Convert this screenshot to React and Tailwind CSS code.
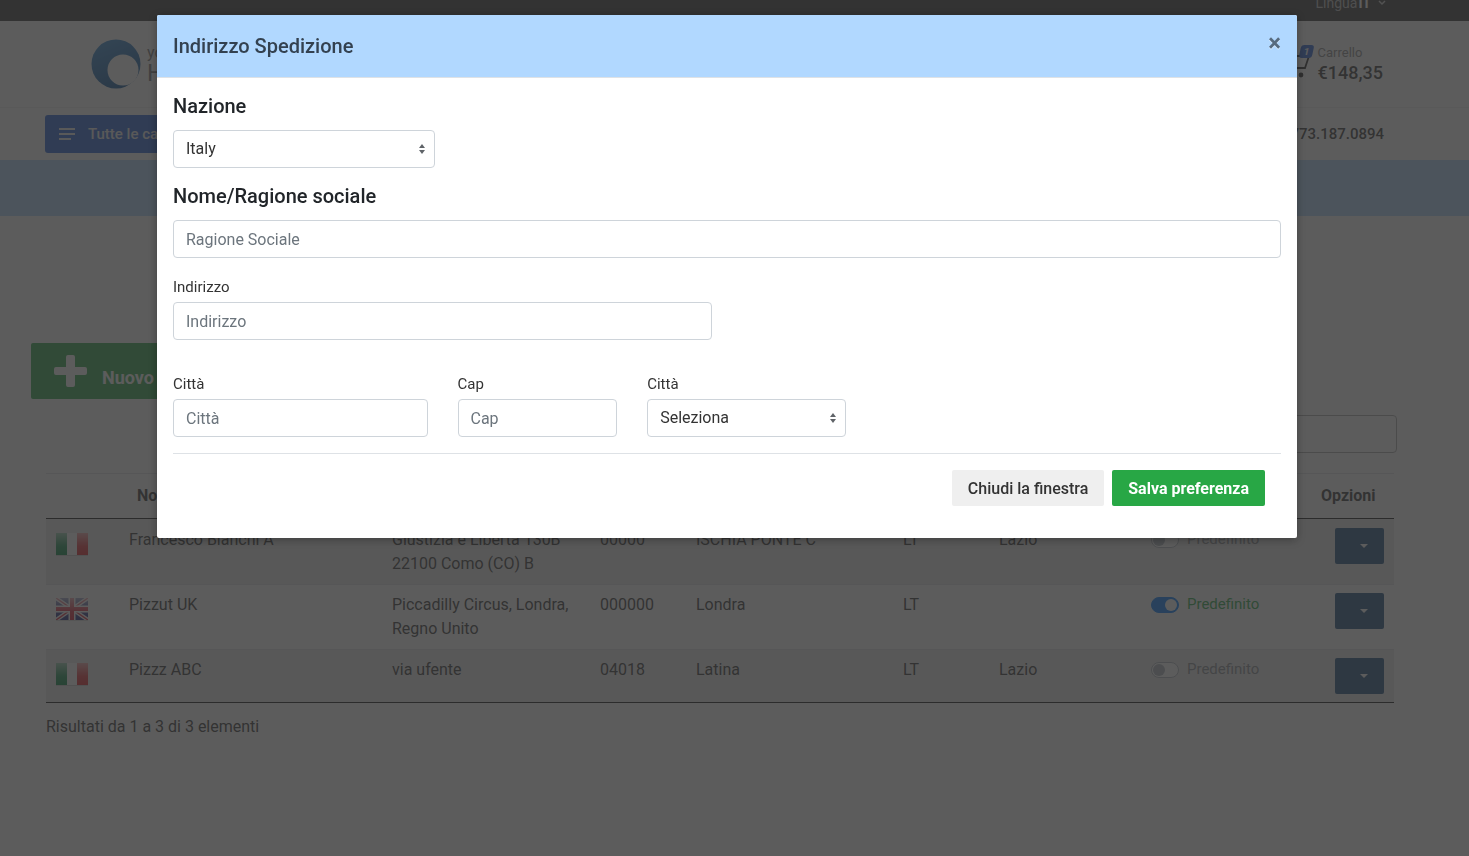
import { useState } from 'react';

const inputClass =
  'block h-[38px] w-full rounded border border-[#ced4da] bg-white px-3 text-base text-[#495057] placeholder:text-[#6c757d]';

const addresses = [
  {
    id: 1,
    flag: 'it',
    name: 'Francesco Bianchi A',
    address: ['Giustizia e Libertà 130B', '22100 Como (CO) B'],
    cap: '00000',
    city: 'ISCHIA PONTE C',
    province: 'LT',
    region: 'Lazio',
  },
  {
    id: 2,
    flag: 'uk',
    name: 'Pizzut UK',
    address: ['Piccadilly Circus, Londra,', 'Regno Unito'],
    cap: '000000',
    city: 'Londra',
    province: 'LT',
    region: '',
  },
  {
    id: 3,
    flag: 'it',
    name: 'Pizzz ABC',
    address: ['via ufente'],
    cap: '04018',
    city: 'Latina',
    province: 'LT',
    region: 'Lazio',
  },
];

const Flag = ({ country, id }) => (
  <svg width="32" height="32" viewBox="0 0 32 32" className="block" aria-hidden="true">
    <defs>
      <linearGradient id={`gloss-${id}`} x1="0" y1="0" x2="0" y2="1">
        <stop offset="0" stopColor="#fff" stopOpacity="0.6" />
        <stop offset="0.6" stopColor="#fff" stopOpacity="0.1" />
        <stop offset="1" stopColor="#fff" stopOpacity="0" />
      </linearGradient>
    </defs>
    {country === 'it' ? (
      <>
        <rect x="0" y="5" width="11" height="22" fill="#00843d" />
        <rect x="11" y="5" width="10" height="22" fill="#fff" />
        <rect x="21" y="5" width="11" height="22" fill="#e01b22" />
      </>
    ) : (
      <svg x="0" y="5" width="32" height="22" viewBox="0 0 32 22">
        <rect width="32" height="22" fill="#1a237b" />
        <path d="M0 0L32 22M32 0L0 22" stroke="#fff" strokeWidth="4" />
        <path d="M0 0L32 22M32 0L0 22" stroke="#d8142c" strokeWidth="1.4" />
        <path d="M16 0V22M0 11H32" stroke="#fff" strokeWidth="7" />
        <path d="M16 0V22M0 11H32" stroke="#d8142c" strokeWidth="4" />
      </svg>
    )}
    <rect x="0" y="5" width="32" height="22" fill={`url(#gloss-${id})`} />
    <rect x="0" y="27" width="32" height="1" fill="#000" opacity="0.15" />
  </svg>
);

const TopBar = () => (
  <div className="flex h-[21px] items-end overflow-hidden bg-[#333] pr-[83px] text-sm">
    <button type="button" className="ml-auto flex h-9 shrink-0 items-center text-[#bbb]">
      Lingua<span className="ml-px font-bold text-white">IT</span>
      <svg width="8" height="6" viewBox="0 0 8 6" fill="none" stroke="#ccc" strokeWidth="1.5" className="ml-[7px]">
        <path d="M1 1l3 3 3-3" />
      </svg>
    </button>
  </div>
);

const Header = () => (
  <header>
    <div className="flex h-[87px] items-center border-b border-[#eee] pl-[91px] pr-[86px]">
      <a href="#home" className="flex items-center gap-[6px] text-[#777]">
        <svg width="50" height="50" viewBox="0 0 50 50" aria-hidden="true">
          <defs>
            <linearGradient id="logo" x1="0.3" y1="0" x2="0.7" y2="1">
              <stop offset="0" stopColor="#3387d0" />
              <stop offset="1" stopColor="#0a4f94" />
            </linearGradient>
          </defs>
          <circle cx="25" cy="25" r="24.5" fill="url(#logo)" />
          <circle cx="32" cy="31" r="15.5" fill="#fff" />
        </svg>
        <span className="flex flex-col">
          <span className="text-base leading-[18px]">your logo</span>
          <span className="text-2xl leading-[22px]">HERE</span>
        </span>
      </a>
      <a href="#cart" className="ml-auto flex items-center gap-2">
        <span className="relative block">
          <svg width="28" height="28" viewBox="0 0 28 28" fill="none" stroke="#222" strokeWidth="1.8">
            <path d="M0 3h4l5 15h14l4-12H6" />
            <circle cx="11" cy="25" r="1.5" fill="#222" />
            <circle cx="19" cy="25" r="1.5" fill="#222" />
          </svg>
          <span className="absolute -top-[5px] left-[18px] flex h-[13px] w-[13px] -skew-x-12 items-center justify-center rounded-[3px] bg-[#2660d4] text-[10px] font-bold text-white">
            1
          </span>
        </span>
        <span className="flex flex-col">
          <span className="text-[13px] leading-[18px] text-[#888]">Carrello</span>
          <span className="text-lg leading-[22px] font-medium text-[#333]">€148,35</span>
        </span>
      </a>
    </div>
    <div className="flex h-[52px] items-center pl-[45px] pr-[85px]">
      <button
        type="button"
        className="flex h-[38px] w-[270px] items-center gap-3 rounded-[3px] bg-[#2660d4] pl-[14px] text-[15px] font-medium text-[#eee]"
      >
        <svg width="17" height="12" viewBox="0 0 17 12" fill="#eee">
          <path d="M0 0h16v2H0zM0 5h16v2H0zM0 10h12v2H0z" />
        </svg>
        Tutte le categorie
      </button>
      <span className="ml-auto text-[15px] font-medium text-[#333]">773.187.0894</span>
    </div>
    <div className="h-14 bg-[#b1d8ff]" />
  </header>
);

const DefaultSwitch = ({ checked, onChange }) => (
  <label
    className={`flex h-[22px] items-center gap-2 text-[15px] ${checked ? 'text-[#28a745]' : 'text-[#888d92]'}`}
  >
    <input
      type="checkbox"
      role="switch"
      checked={checked}
      onChange={onChange}
      className="relative top-px h-4 w-7 shrink-0 appearance-none rounded-full border border-[#adb5bd] bg-white before:absolute before:top-px before:left-px before:size-3 before:rounded-full before:bg-[#adb5bd] checked:border-[#007bff] checked:bg-[#007bff] checked:before:left-[13px] checked:before:bg-white"
    />
    Predefinito
  </label>
);

const AddressTable = ({ preferred, onPrefer }) => (
  <table className="w-full table-fixed border-collapse text-base text-[#333]">
    <colgroup>
      <col className="w-[73px]" />
      <col className="w-[263px]" />
      <col className="w-[208px]" />
      <col className="w-[96px]" />
      <col className="w-[207px]" />
      <col className="w-[96px]" />
      <col className="w-[152px]" />
      <col className="w-[170px]" />
      <col className="w-[83px]" />
    </colgroup>
    <thead>
      <tr className="border-t border-b border-t-[#dee2e6] border-b-[#111] text-left">
        <th className="h-[45px]" />
        <th className="px-[18px] font-bold">Nome</th>
        <th className="px-[10px] font-bold">Indirizzo</th>
        <th className="px-[10px] font-bold">Cap</th>
        <th className="px-[10px] font-bold">Città</th>
        <th className="px-[10px] font-bold">Prov.</th>
        <th className="px-[10px] font-bold">Regione</th>
        <th className="px-[10px] font-bold">Stato</th>
        <th className="px-[10px] font-bold">Opzioni</th>
      </tr>
    </thead>
    <tbody>
      {addresses.map((row) => (
        <tr
          key={row.id}
          className="border-t border-[#dee2e6] align-top first:border-t-[#111] odd:bg-[#ebebeb] last:border-b last:border-b-[#111] first:*:pt-[9px]"
        >
          <td className="px-[10px] py-2">
            <Flag country={row.flag} id={row.id} />
          </td>
          <td className="px-[10px] py-2">{row.name}</td>
          <td className="px-[10px] py-2 whitespace-nowrap">
            {row.address.map((line) => (
              <div key={line}>{line}</div>
            ))}
          </td>
          <td className="px-[10px] py-2">{row.cap}</td>
          <td className="px-[10px] py-2">{row.city}</td>
          <td className="px-[10px] py-2">{row.province}</td>
          <td className="px-[10px] py-2">{row.region}</td>
          <td className="px-[10px] py-2">
            <DefaultSwitch checked={preferred === row.id} onChange={() => onPrefer(row.id)} />
          </td>
          <td className="px-[10px] py-2">
            <button
              type="button"
              aria-label="Opzioni"
              className="ml-auto flex h-9 w-[49px] items-center rounded-[2px] bg-[#1c4c7e] pl-[25px]"
            >
              <svg width="8" height="4" viewBox="0 0 8 4" fill="#fff">
                <path d="M0 0h8L4 4z" />
              </svg>
            </button>
          </td>
        </tr>
      ))}
    </tbody>
  </table>
);

const SelectBox = ({ id, options }) => (
  <div className="relative">
    <select
      id={id}
      className="block h-[38px] w-full appearance-none rounded border border-[#ced4da] bg-white pr-7 pl-3 text-base text-[#333]"
    >
      {options.map((option) => (
        <option key={option}>{option}</option>
      ))}
    </select>
    <svg
      width="6"
      height="10"
      viewBox="0 0 6 10"
      fill="#5f6368"
      className="pointer-events-none absolute top-[14px] right-[10px]"
    >
      <path d="M3 0L6 4H0zM3 10L0 6h6z" />
    </svg>
  </div>
);

const AddressModal = ({ onClose }) => (
  <div className="fixed inset-0 overflow-auto bg-[#333]/80 pt-[15px] pr-[15px]">
    <div
      role="dialog"
      aria-labelledby="modal-title"
      className="mx-auto max-w-[1140px] rounded-[2px] bg-white shadow-[0_2px_8px_rgba(0,0,0,0.3)]"
    >
      <div className="flex h-[63px] items-center justify-between rounded-t-[2px] border-b border-[#dee2e6] bg-[#b1d8ff] px-4">
        <h5 id="modal-title" className="text-xl font-medium text-[#334150]">
          Indirizzo Spedizione
        </h5>
        <button
          type="button"
          aria-label="Chiudi"
          onClick={onClose}
          className="pb-[6px] text-2xl leading-6 font-bold text-black opacity-50 [text-shadow:0_1px_0_#fff]"
        >
          ×
        </button>
      </div>

      <form className="p-4 text-[#333]" onSubmit={(e) => e.preventDefault()}>
        <label htmlFor="country" className="mb-3 block text-xl leading-6 font-medium text-[#212529]">
          Nazione
        </label>
        <div className="w-[262px]">
          <SelectBox id="country" options={['Italy', 'United Kingdom']} />
        </div>

        <label htmlFor="company" className="mt-4 mb-3 block text-xl leading-6 font-medium text-[#212529]">
          Nome/Ragione sociale
        </label>
        <input id="company" type="text" placeholder="Ragione Sociale" className={inputClass} />

        <div className="mt-[18px] grid grid-cols-12 gap-x-[30px]">
          <div className="col-span-6">
            <label htmlFor="street" className="mb-1 block text-[15px] leading-[22px]">
              Indirizzo
            </label>
            <input id="street" type="text" placeholder="Indirizzo" className={inputClass} />
          </div>
        </div>

        <div className="mt-[33px] grid grid-cols-12 gap-x-[30px]">
          <div className="col-span-3">
            <label htmlFor="city" className="mb-1 block text-[15px] leading-[22px]">
              Città
            </label>
            <input id="city" type="text" placeholder="Città" className={inputClass} />
          </div>
          <div className="col-span-2">
            <label htmlFor="cap" className="mb-1 block text-[15px] leading-[22px]">
              Cap
            </label>
            <input id="cap" type="text" placeholder="Cap" className={inputClass} />
          </div>
          <div className="col-span-3 max-w-[199px]">
            <label htmlFor="province" className="mb-1 block text-[15px] leading-[22px]">
              Città
            </label>
            <SelectBox id="province" options={['Seleziona']} />
          </div>
        </div>

        <div className="mt-4 flex justify-end gap-2 border-t border-[#dee2e6] p-4">
          <button
            type="button"
            onClick={onClose}
            className="h-9 rounded-[2px] bg-[#efefef] px-4 pt-px text-base font-medium text-[#333]"
          >
            Chiudi la finestra
          </button>
          <button type="submit" className="h-9 rounded-[2px] bg-[#28a745] px-4 pt-px text-base font-bold text-white">
            Salva preferenza
          </button>
        </div>
      </form>
    </div>
  </div>
);

const App = () => {
  const [open, setOpen] = useState(true);
  const [preferred, setPreferred] = useState(2);

  return (
    <div className="min-h-screen bg-white font-[Roboto,sans-serif]">
      <TopBar />
      <Header />

      <main className="pt-[127px] pr-[75px] pl-[46px]">
        <button
          type="button"
          onClick={() => setOpen(true)}
          className="-ml-[15px] flex h-14 items-center gap-[14px] rounded-[2px] bg-[#28a745] px-[22px] text-lg font-bold text-white"
        >
          <svg width="35" height="35" viewBox="0 0 35 35" fill="#fff">
            <path d="M15 1h5a2 2 0 0 1 2 2v10h10a2 2 0 0 1 2 2v4a2 2 0 0 1-2 2H22v10a2 2 0 0 1-2 2h-5a2 2 0 0 1-2-2V21H3a2 2 0 0 1-2-2v-4a2 2 0 0 1 2-2h10V3a2 2 0 0 1 2-2z" />
          </svg>
          <span className="pt-[14px]">Nuovo indirizzo</span>
        </button>

        <div className="-mr-[3px] mt-4 mb-5 flex justify-end">
          <input
            type="search"
            aria-label="Cerca"
            className="h-[38px] w-[240px] rounded border border-[#aaa] bg-white px-3"
          />
        </div>

        <AddressTable preferred={preferred} onPrefer={setPreferred} />
        <p className="mt-3 text-base text-[#333]">Risultati da 1 a 3 di 3 elementi</p>
      </main>

      {open && <AddressModal onClose={() => setOpen(false)} />}
    </div>
  );
};

export default App;
